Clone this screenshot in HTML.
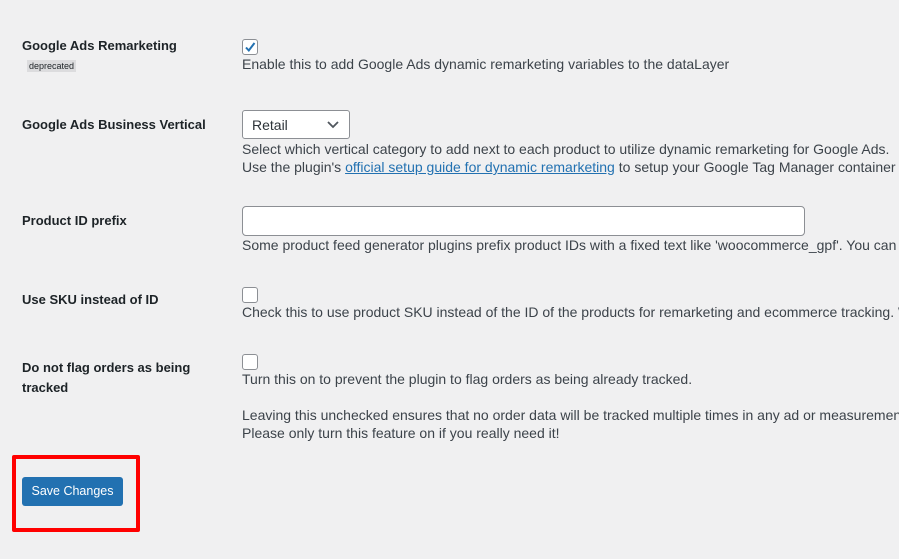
<!DOCTYPE html>
<html><head><meta charset="utf-8"><style>
body{margin:0;width:899px;height:559px;background:#f0f0f1;font-family:"Liberation Sans",sans-serif;color:#3c434a;font-size:14px;overflow:hidden;position:relative}
.a{position:absolute;white-space:nowrap}
.l{font-weight:bold;color:#1d2327;font-size:13px}
.cb{position:absolute;width:14px;height:14px;border:1px solid #8c8f94;border-radius:3px;background:#fff;left:242px}
a{color:#2271b1;text-decoration:underline}
</style></head><body>
<div class="a l" style="left:22px;top:38px">Google Ads Remarketing</div>
<div class="a" style="left:27px;top:60px;background:#dcdcde;font-size:9px;padding:1px 2px;color:#1d2327">deprecated</div>
<div class="cb" style="top:39px"><svg width="14" height="14" viewBox="0 0 14 14"><path d="M3 7.5l2.8 3L11.5 3" fill="none" stroke="#2271b1" stroke-width="2"/></svg></div>
<div class="a" style="left:242px;top:56px">Enable this to add Google Ads dynamic remarketing variables to the dataLayer</div>

<div class="a l" style="left:22px;top:117px">Google Ads Business Vertical</div>
<div class="a" style="left:242px;top:110px;width:108px;height:29px;border:1px solid #8c8f94;border-radius:3px;background:#fff;box-sizing:border-box;padding:6px 0 0 9px;color:#2c3338">Retail<svg style="position:absolute;right:10px;top:10px" width="12" height="8"><path d="M1 1l5 5 5-5" fill="none" stroke="#50575e" stroke-width="1.8"/></svg></div>
<div class="a" style="left:242px;top:141px">Select which vertical category to add next to each product to utilize dynamic remarketing for Google Ads.</div>
<div class="a" style="left:242px;top:159px">Use the plugin's <a>official setup guide for dynamic remarketing</a> to setup your Google Tag Manager container</div>

<div class="a l" style="left:22px;top:213px">Product ID prefix</div>
<div class="a" style="left:242px;top:206px;width:563px;height:30px;border:1px solid #8c8f94;border-radius:4px;background:#fff;box-sizing:border-box"></div>
<div class="a" style="left:242px;top:237px">Some product feed generator plugins prefix product IDs with a fixed text like 'woocommerce_gpf'. You can</div>

<div class="a l" style="left:22px;top:292px">Use SKU instead of ID</div>
<div class="cb" style="top:287px"></div>
<div class="a" style="left:242px;top:304px">Check this to use product SKU instead of the ID of the products for remarketing and ecommerce tracking. W</div>

<div class="a l" style="left:22px;top:358px;line-height:20px">Do not flag orders as being<br>tracked</div>
<div class="cb" style="top:354px"></div>
<div class="a" style="left:242px;top:371px">Turn this on to prevent the plugin to flag orders as being already tracked.</div>
<div class="a" style="left:242px;top:407px">Leaving this unchecked ensures that no order data will be tracked multiple times in any ad or measurement</div>
<div class="a" style="left:242px;top:425px">Please only turn this feature on if you really need it!</div>

<div class="a" style="left:12px;top:455px;width:120px;height:69px;border:4px solid #f00;border-radius:2px"></div>
<div class="a" style="left:22px;top:477px;width:101px;height:29px;background:#2271b1;border-radius:3px;color:#fff;font-size:12.5px;text-align:center;line-height:29px">Save Changes</div>
</body></html>
